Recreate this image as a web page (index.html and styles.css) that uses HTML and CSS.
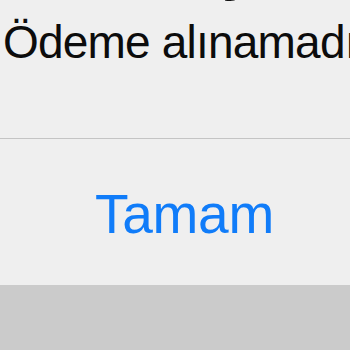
FILE: index.html
```html
<!DOCTYPE html>
<html lang="tr">
<head>
<meta charset="utf-8">
<link rel="stylesheet" href="styles.css">
<title>Alert</title>
</head>
<body>
<div class="alert">
  <div class="content">
    <div class="title">Satın alınamıyor</div>
    <div class="message">Ödeme alınamadı</div>
  </div>
  <div class="separator"></div>
  <div class="actions">
    <span class="button">Tamam</span>
  </div>
</div>
<div class="backdrop"></div>
</body>
</html>
```
FILE: styles.css
```css
html, body {
  margin: 0;
  padding: 0;
  width: 350px;
  height: 350px;
  overflow: hidden;
  background: #cbcbcb;
}
.alert {
  height: 285px;
  background: #efefef;
  display: flex;
  flex-direction: column;
  overflow: hidden;
  font-family: "Liberation Sans", Arial, sans-serif;
}
.content {
  height: 138px;
  padding-left: 3px;
  display: flex;
  flex-direction: column;
  white-space: nowrap;
}
.title {
  margin-top: -61px;
  margin-left: -151px;
  height: 60px;
  font-size: 60px;
  line-height: 60px;
  font-weight: 700;
  color: #111;
}
.message {
  margin-top: 15px;
  font-size: 46px;
  line-height: 56px;
  letter-spacing: -0.8px;
  color: #0c0c0c;
}
.separator {
  height: 1px;
  background: #c4c4c4;
  flex: none;
}
.actions {
  flex: 1;
  display: flex;
  align-items: center;
  justify-content: center;
  padding-left: 19px;
  padding-top: 4px;
}
.button {
  font-size: 55px;
  line-height: 55px;
  letter-spacing: -0.3px;
  color: #107cf9;
}
.backdrop {
  height: 65px;
}
```
